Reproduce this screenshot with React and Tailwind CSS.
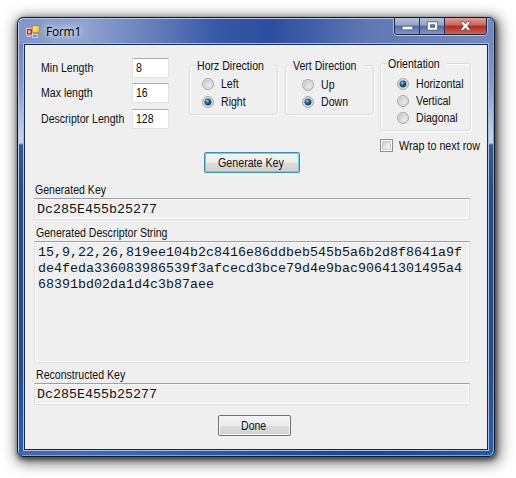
import React from "react";

function Label({ children, className = "" }) {
  return (
    <span className={`block w-max origin-left whitespace-nowrap font-['Liberation_Sans',Arial,sans-serif] text-[12px] leading-[14px] text-[#101010] ${className || "scale-x-[0.88]"}`}>
      {children}
    </span>
  );
}

function Field({ label, value, className }) {
  return (
    <div className={`flex h-5 items-center ${className}`}>
      <div className="w-[91px]"><Label>{label}</Label></div>
      <div className="flex h-5 w-[37px] items-center border border-[#e2e3e8] border-t-[#abadb3] bg-white pl-[3px]">
        <Label>{value}</Label>
      </div>
    </div>
  );
}

function Radio({ label, checked, className = "h-[17px]" }) {
  return (
    <div className={`flex items-center gap-[7px] ${className}`}>
      <svg width="12" height="12" viewBox="0 0 12 12">
        <circle cx="6" cy="6" r="5.4" fill="#f6f6f6" stroke="#8e8f8f" strokeWidth="0.9" />
        <circle cx="6" cy="6" r="3.9" fill="url(#radioFace)" stroke={checked ? "#9fb9c8" : "#c2c5c8"} strokeWidth="0.7" />
        {checked && <circle cx="6" cy="6" r="3.1" fill="url(#radioDot)" stroke="#12405f" strokeWidth="0.7" />}
      </svg>
      <Label>{label}</Label>
    </div>
  );
}

function Group({ title, className, bodyClass, children }) {
  return (
    <fieldset className={`w-[89px] shrink-0 rounded-[3px] border border-[#d7dadd] shadow-[inset_1px_1px_0_#fff,1px_1px_0_#fff] ${className}`}>
      <div className="-mt-[7px] flex h-[14px] pl-[5px]">
        <div className="h-[14px] bg-[#efefef] pl-[2px]">{title}</div>
      </div>
      <div className={bodyClass}>{children}</div>
    </fieldset>
  );
}

function Sunken({ className, children }) {
  return (
    <div className={`ml-[9px] w-[436px] border border-[#dedede] border-t-[#a0a0a0] font-['Liberation_Mono','Courier_New',monospace] text-[13.333px] leading-4 text-[#151515] shadow-[inset_-1px_-1px_0_#fff,inset_1px_1px_0_#f8f8f8] ${className}`}>
      {children}
    </div>
  );
}

function FormIcon() {
  return (
    <svg width="14" height="14" viewBox="0 0 14 14">
      <rect x="0.5" y="3.5" width="6" height="6.5" fill="#a72f27" stroke="#e6c9cb" />
      <rect x="2.3" y="5.3" width="2.2" height="3" fill="#f6d8ca" />
      <rect x="6.4" y="1" width="6.8" height="6.8" rx="0.7" fill="url(#gold)" stroke="#b98515" strokeWidth="0.8" />
      <path d="M6.5 9.5h5v3h-5z" fill="#5b92df" stroke="#d8eaff" strokeWidth="0.8" />
      <path d="M1 11.5h4" stroke="#c3cfe8" />
    </svg>
  );
}

function WindowControls() {
  return (
    <div className="flex h-[17px] w-[93px] overflow-hidden rounded-b-[4px] border border-t-0 border-[#202b47] shadow-[0_1px_0_#bac7e3,1px_0_0_#a9bbdc,-1px_0_0_#a9bbdc]">
      <div className="flex w-[25px] items-center justify-center border-r border-[#283452] bg-[linear-gradient(to_bottom,#b4c0da,#94a3c5_45%,#566b9b_50%,#7e97cb)]">
        <svg width="13" height="14" viewBox="0 0 13 14"><rect x="1.3" y="7.3" width="10.4" height="3.5" rx="0.5" fill="#fff" stroke="#4d5669" strokeWidth="0.7" /></svg>
      </div>
      <div className="flex w-[25px] items-center justify-center border-r border-[#283452] bg-[linear-gradient(to_bottom,#b4c0da,#94a3c5_45%,#566b9b_50%,#7e97cb)]">
        <svg width="13" height="14" viewBox="0 0 13 14"><path fillRule="evenodd" d="M1.3 2.8h10.4v8.4H1.3zM4.3 5.7v2.6h4.4V5.7z" fill="#fff" stroke="#46536d" strokeWidth="0.8" /></svg>
      </div>
      <div className="flex flex-1 items-center justify-center bg-[linear-gradient(to_bottom,#dda09b,#c8645a_45%,#ab2b20_50%,#cf6355)]">
        <svg width="13" height="14" viewBox="0 0 13 14"><path d="M1.2 2.8h3.4l1.9 2.3 1.9-2.3h3.4L8.6 7l3.2 4.2H8.4L6.5 8.9l-1.9 2.3H1.2L4.4 7z" fill="#fff" stroke="#683e45" strokeWidth="0.7" /></svg>
      </div>
    </div>
  );
}

export default function App() {
  return (
    <div className="h-[478px] w-[516px] overflow-hidden bg-white pl-[17px] pt-[17px]">
      <svg width="0" height="0" className="absolute">
        <defs>
          <linearGradient id="radioFace" x1="0" y1="0" x2="1" y2="1"><stop stopColor="#c3c7cb" /><stop offset="1" stopColor="#fafafa" /></linearGradient>
          <radialGradient id="radioDot" cx="0.35" cy="0.3" r="0.75"><stop stopColor="#b5e2f3" /><stop offset="0.4" stopColor="#2876a5" /><stop offset="1" stopColor="#0b3557" /></radialGradient>
          <linearGradient id="gold" x1="0" y1="0" x2="1" y2="1"><stop stopColor="#fff6b0" /><stop offset="1" stopColor="#efb313" /></linearGradient>
        </defs>
      </svg>
      <div className="flex h-[440px] w-[478px] flex-col rounded-[6px] border border-[#10182c] bg-[linear-gradient(to_bottom,#6079b8_0px,#7189c1_30px,#829bce_65px,#bacbe6_110px,#c4d3ea_125px,#355895_127px,#28498d_180px,#254b8f_350px,#2861ad_438px)] shadow-[inset_1px_1px_0_#b9cae6,inset_-1px_-1px_0_#4cbcf0,1px_2px_4px_1px_rgba(0,0,0,0.5),2px_3px_14px_3px_rgba(0,0,0,0.55)]">
        <div className="ml-px mt-px flex h-[25px] w-[474px] shrink-0 justify-between rounded-t-[5px] bg-[linear-gradient(to_right,#8296c8_0%,#8ea2cf_14%,#7089c1_24%,#5472b3_33%,#3559a6_42%,#2b4e9f_53%,#3f60a8_62%,#6079b5_74%,#7389bd_100%)]">
          <div className="flex items-center pl-[7px]">
            <FormIcon />
            <span className="ml-[6px] whitespace-nowrap font-['Open_Sans',sans-serif] text-[12px] leading-4 tracking-[-0.25px] text-black [text-shadow:0_0_6px_#fff,0_0_9px_#dce5f7,0_0_12px_#dce5f7]">Form1</span>
          </div>
          <div className="mr-[6px] -mt-px"><WindowControls /></div>
        </div>
        <div className="ml-[6px] h-[406px] w-[464px] shrink-0 border border-[#142851] bg-[#efefef] shadow-[0_0_0_1px_#aebfdd]">
          <div className="flex h-[107px]">
            <div className="ml-4 w-[148px] shrink-0 pt-[13px]">
              <Field label="Min Length" value="8" className="" />
              <Field label="Max length" value="16" className="mt-[5px]" />
              <Field label="Descriptor Length" value="128" className="mt-[6px]" />
            </div>
            <div className="flex w-[191px] shrink-0 gap-[7px]">
              <Group title={<Label>Horz Direction</Label>} className="mt-5 h-[50px]" bodyClass="pl-[12px] pt-[2px]">
                <Radio label="Left" className="h-[18px]" />
                <Radio label="Right" checked className="h-[18px]" />
              </Group>
              <Group title={<Label>Vert Direction</Label>} className="mt-5 h-[50px]" bodyClass="pl-[16px] pt-[3px]">
                <Radio label="Up" /><Radio label="Down" checked />
              </Group>
            </div>
            <div className="w-[105px] shrink-0 pt-[18px]">
              <Group title={<Label>Orientation</Label>} className="h-[68px]" bodyClass="pl-[16px] pt-[4px]">
                <Radio label="Horizontal" checked /><Radio label="Vertical" /><Radio label="Diagonal" />
              </Group>
              <div className="mt-[8px] flex h-[13px] items-center gap-[6px]">
                <div className="flex h-[13px] w-[13px] shrink-0 items-center justify-center border border-[#8e8f8f] bg-white">
                  <div className="h-[9px] w-[9px] border border-[#c5c8cc] bg-linear-to-br from-[#cbd0d5] to-[#fafafa]" />
                </div>
                <Label className="scale-x-[0.895]">Wrap to next row</Label>
              </div>
            </div>
          </div>
          <button className="ml-[179px] flex h-[21px] w-[96px] items-center rounded-[2px] border border-[#3c8faa] bg-[linear-gradient(to_bottom,#f3f3f3,#ebebeb_50%,#dddddd_51%,#cfcfcf)] pl-[13px] shadow-[inset_0_0_0_1px_#75cde3]">
            <Label className="scale-x-[0.89]">Generate Key</Label>
          </button>
          <div className="flex h-[25px] items-end pb-[1px] pl-[10px]"><Label>Generated Key</Label></div>
          <Sunken className="flex h-[22px] items-center pl-[2px] pt-px">Dc285E455b25277</Sunken>
          <div className="flex h-[21px] items-end pb-[1px] pl-[11px]"><Label>Generated Descriptor String</Label></div>
          <Sunken className="h-[122px] pl-[3px] pt-[3px]">
            <div>15,9,22,26,819ee104b2c8416e86ddbeb545b5a6b2d8f8641a9f</div>
            <div>de4feda336083986539f3afcecd3bce79d4e9bac90641301495a4</div>
            <div>68391bd02da1d4c3b87aee</div>
          </Sunken>
          <div className="flex h-5 items-end pb-[1px] pl-[11px]"><Label>Reconstructed Key</Label></div>
          <Sunken className="flex h-[22px] items-center pl-[2px] pt-px">Dc285E455b25277</Sunken>
          <button className="ml-[193px] mt-[10px] flex h-[21px] w-[73px] items-center rounded-[2px] border border-[#707070] bg-[linear-gradient(to_bottom,#f3f3f3,#ebebeb_50%,#dddddd_51%,#d0d0d0)] pl-[22px] shadow-[inset_0_0_0_1px_#f8f8f8]">
            <Label>Done</Label>
          </button>
        </div>
        <div className="mx-[3px] mt-px h-[4px] shrink-0 rounded-b-[3px] bg-[linear-gradient(to_right,#4568a8_0%,#3d6db5_12%,#2d68b2_28%,#1852a1_55%,#124895_75%,#2357a5_100%)]" />
      </div>
    </div>
  );
}
